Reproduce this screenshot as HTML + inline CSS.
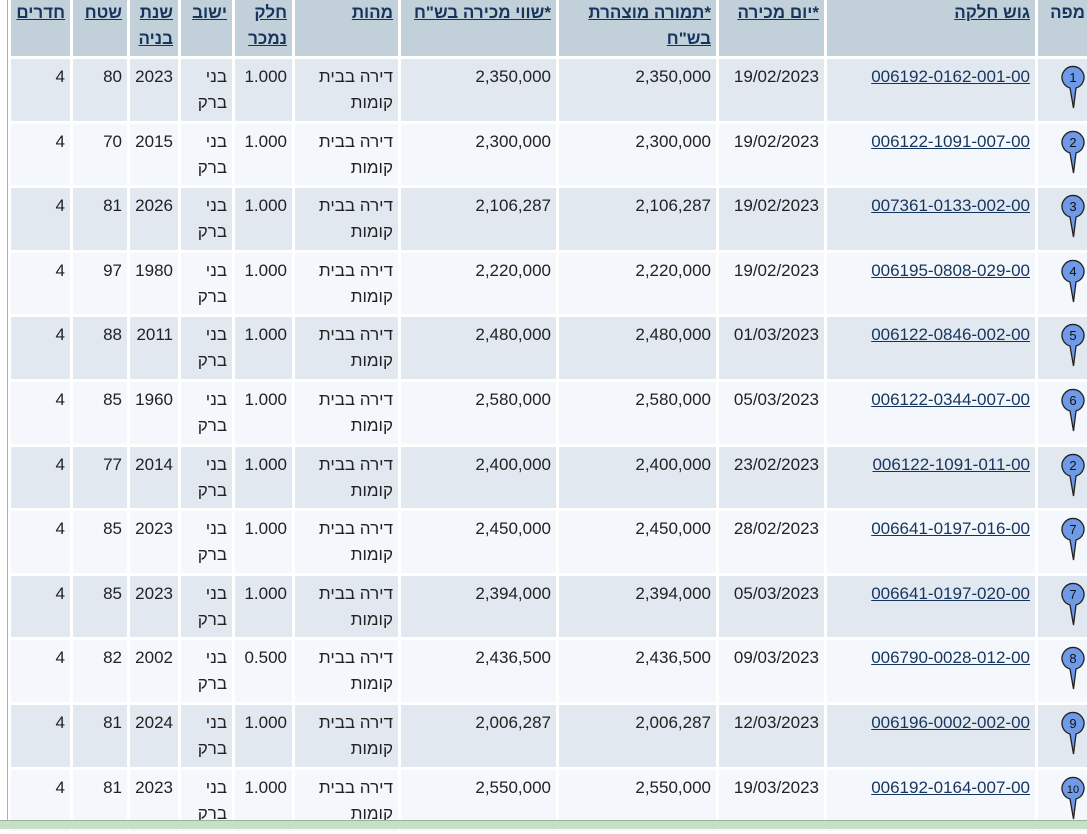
<!DOCTYPE html>
<html><head><meta charset="utf-8"><style>
html,body{margin:0;padding:0;width:1087px;height:828px;overflow:hidden;background:#fff}
body{font-family:"Liberation Sans",Arial,"Noto Sans CJK JP",sans-serif;font-size:17px;color:#222}
.wrap{position:absolute;left:7px;top:0;border-left:1px solid #a8b0b8;height:828px;width:1100px}
table{position:absolute;left:0px;top:-3px;direction:rtl;table-layout:fixed;border-collapse:separate;border-spacing:3px;width:1085px}
td,th{box-sizing:border-box;padding:5px 5px 0 5px;vertical-align:top;line-height:26px;text-align:right;overflow:hidden;white-space:normal}
th{background:#c2d1d9;font-weight:bold;height:56px;padding-top:0;color:#15355f}
th u,a{color:#15355f;text-decoration:underline}
tr.o td{background:#e2e8f0}
tr.e td{background:#f4f8fc}
td{height:61.6px}
.pin{display:block;margin:6px auto 0 23px}
.bar{position:absolute;left:0;top:820px;width:1087px;height:8px;background:#c6e0c6;border-top:1px solid #9cb09c}
</style></head><body>
<div class="wrap">
<table>
<tr><th style="width:52px">מפה</th><th style="width:208px"><u>גוש חלקה</u></th><th style="width:105px"><u>*יום מכירה</u></th><th style="width:157px"><u>*תמורה מוצהרת בש"ח</u></th><th style="width:155px"><u>*שווי מכירה בש"ח</u></th><th style="width:103px"><u>מהות</u></th><th style="width:57px"><u>חלק נמכר</u></th><th style="width:51px"><u>ישוב</u></th><th style="width:48px"><u>שנת בניה</u></th><th style="width:54px"><u>שטח</u></th><th style="width:59px"><u>חדרים</u></th></tr>
</table>
</div>
<script>
var d=[["1","006192-0162-001-00","19/02/2023","2,350,000","1.000","2023","80"],
["2","006122-1091-007-00","19/02/2023","2,300,000","1.000","2015","70"],
["3","007361-0133-002-00","19/02/2023","2,106,287","1.000","2026","81"],
["4","006195-0808-029-00","19/02/2023","2,220,000","1.000","1980","97"],
["5","006122-0846-002-00","01/03/2023","2,480,000","1.000","2011","88"],
["6","006122-0344-007-00","05/03/2023","2,580,000","1.000","1960","85"],
["2","006122-1091-011-00","23/02/2023","2,400,000","1.000","2014","77"],
["7","006641-0197-016-00","28/02/2023","2,450,000","1.000","2023","85"],
["7","006641-0197-020-00","05/03/2023","2,394,000","1.000","2023","85"],
["8","006790-0028-012-00","09/03/2023","2,436,500","0.500","2002","82"],
["9","006196-0002-002-00","12/03/2023","2,006,287","1.000","2024","81"],
["10","006192-0164-007-00","19/03/2023","2,550,000","1.000","2023","81"]];
var h="";
d.forEach(function(r,i){
var fs=r[0].length>1?11:13;
var pin='<svg class="pin" width="24" height="44" viewBox="0 0 24 44"><path d="M12.5 43 L9 23 A11 11 0 1 1 15 23 Z" fill="#6f9ae8" stroke="#222" stroke-width="1.3"/><text x="12" y="17" font-size="'+fs+'" text-anchor="middle" fill="#111" font-family="Liberation Sans,sans-serif">'+r[0]+'</text></svg>';
h+='<tr class="'+(i%2?'e':'o')+'"><td style="padding:0">'+pin+'</td><td><a>'+r[1]+'</a></td><td>'+r[2]+'</td><td>'+r[3]+'</td><td>'+r[3]+'</td><td>דירה בבית קומות</td><td>'+r[4]+'</td><td>בני ברק</td><td>'+r[5]+'</td><td>'+r[6]+'</td><td>4</td></tr>';
});
document.querySelector('table tbody').insertAdjacentHTML('beforeend',h);
</script>
<div class="bar"></div>
</body></html>
